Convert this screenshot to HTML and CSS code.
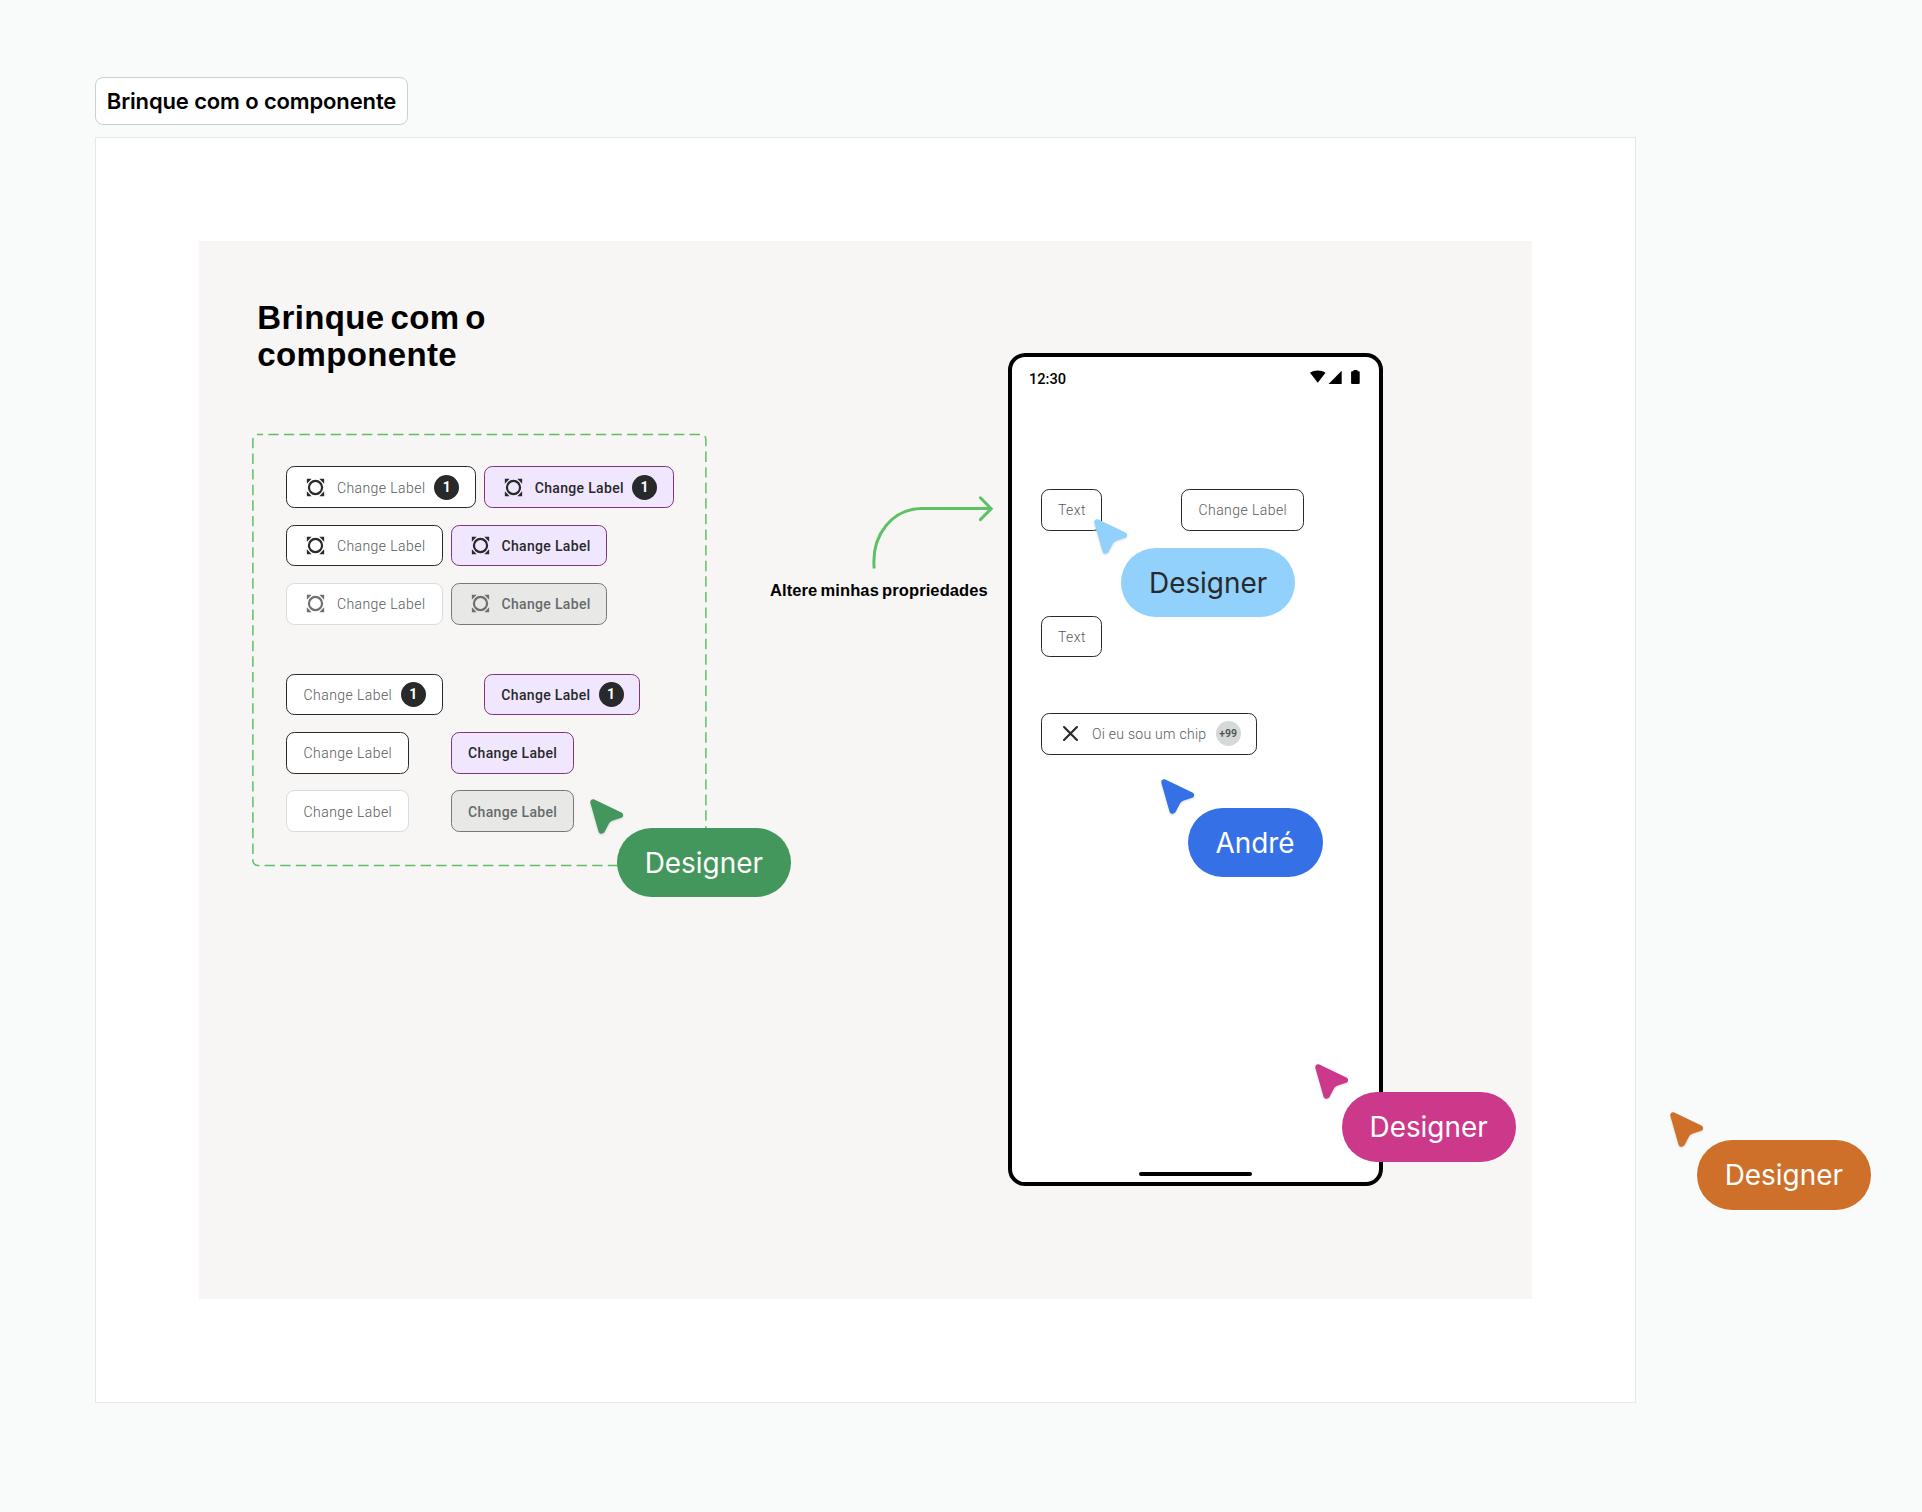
FILE: index.html
```html
<!DOCTYPE html>
<html lang="pt-BR">
<head>
  <meta charset="UTF-8">
  <title>Brinque com o componente</title>
  <link rel="stylesheet" href="styles.css">
</head>
<body>
  <!-- shared icons -->
  <svg class="defs" width="0" height="0">
    <symbol id="icon-shape" viewBox="0 0 24 24">
      <circle cx="12" cy="12" r="6.3" fill="none" stroke="currentColor" stroke-width="2.1"/>
      <path fill="currentColor" d="M3.7 3.7h4.6L3.7 8.3zM20.3 3.7v4.6l-4.6-4.6zM3.7 20.3v-4.6l4.6 4.6zM20.3 20.3h-4.6l4.6-4.6z"/>
    </symbol>
    <symbol id="icon-close" viewBox="0 0 24 24">
      <path d="M5.8 5.8l12.4 12.4M18.2 5.8L5.8 18.2" fill="none" stroke="currentColor" stroke-width="2.1" stroke-linecap="round"/>
    </symbol>
    <symbol id="icon-cursor" viewBox="0 0 34 36">
      <path fill="currentColor" d="M4.3.4L31.4 13.6C33.8 14.8 33.6 18 31.2 18.8L22.8 21.6C21 22.3 20 23 19 24.6L14.8 32.6C13.4 35.4 9.4 35.4 8.5 32.4L.4 4.1C-.3 1.4 2-.6 4.3.4z"/>
    </symbol>
  </svg>

  <div class="tag">Brinque com o componente</div>

  <div class="frame">
    <div class="panel">
      <div class="left">
        <h1>Brinque com o<br>componente</h1>
        <div class="variants">
          <svg class="dashes" width="456" height="434"><rect x="0.9" y="1.4" width="453" height="431" rx="5"/></svg>
          <div class="row">
            <div class="chip"><svg><use href="#icon-shape"/></svg><span>Change Label</span><b>1</b></div>
            <div class="chip active"><svg><use href="#icon-shape"/></svg><span>Change Label</span><b>1</b></div>
          </div>
          <div class="row">
            <div class="chip"><svg><use href="#icon-shape"/></svg><span>Change Label</span></div>
            <div class="chip active"><svg><use href="#icon-shape"/></svg><span>Change Label</span></div>
          </div>
          <div class="row">
            <div class="chip disabled"><svg><use href="#icon-shape"/></svg><span>Change Label</span></div>
            <div class="chip active disabled"><svg><use href="#icon-shape"/></svg><span>Change Label</span></div>
          </div>
          <div class="row wide first">
            <div class="chip"><span>Change Label</span><b>1</b></div>
            <div class="chip active"><span>Change Label</span><b>1</b></div>
          </div>
          <div class="row wide">
            <div class="chip"><span>Change Label</span></div>
            <div class="chip active"><span>Change Label</span></div>
          </div>
          <div class="row wide">
            <div class="chip disabled"><span>Change Label</span></div>
            <div class="chip active disabled"><span>Change Label</span></div>
          </div>
        </div>
      </div>

      <div class="hint">
        <svg width="124" height="74" viewBox="0 0 124 74" fill="none" stroke="#5fc166" stroke-width="3">
          <path d="M4.2 72.5C1 38 23 13 51.5 12.5H120.5"/>
          <path d="M110.4 1.8l10.8 10.9-10.8 10.9" stroke-linecap="round"/>
        </svg>
        <p>Altere minhas propriedades</p>
      </div>

      <div class="phone">
        <div class="status">
          <span>12:30</span>
          <svg width="50" height="15" viewBox="0 0 50 15">
            <path d="M0 2.8C4.6-.3 10.9-.3 15.5 2.8L7.8 12.8z"/>
            <path d="M31.7.8V14H18.5z"/>
            <path d="M43.5 0h4v1.3h1.2q1 0 1 1V13q0 1-1 1h-6.6q-1 0-1-1V2.3q0-1 1-1h1.4z"/>
          </svg>
        </div>
        <div class="screen">
          <div class="row">
            <div class="chip short"><span>Text</span></div>
            <div class="chip"><span>Change Label</span></div>
          </div>
          <div class="row">
            <div class="chip short"><span>Text</span></div>
          </div>
          <div class="row">
            <div class="chip long"><svg><use href="#icon-close"/></svg><span>Oi eu sou um chip</span><b>+99</b></div>
          </div>
        </div>
        <div class="home"></div>
      </div>
    </div>
  </div>

  <!-- collaborators on the canvas -->
  <div class="cursor green"><svg><use href="#icon-cursor"/></svg><span>Designer</span></div>
  <div class="cursor sky"><svg><use href="#icon-cursor"/></svg><span>Designer</span></div>
  <div class="cursor blue"><svg><use href="#icon-cursor"/></svg><span>André</span></div>
  <div class="cursor pink"><svg><use href="#icon-cursor"/></svg><span>Designer</span></div>
  <div class="cursor orange"><svg><use href="#icon-cursor"/></svg><span>Designer</span></div>
</body>
</html>
```
FILE: styles.css
```css
* { box-sizing: border-box; }
body { margin: 0; padding: 77px 0 0 95px; height: 1512px; position: relative; overflow: hidden; background: #f9fbfa; font-family: Inter, sans-serif; color: #000; }
.defs { position: absolute; }

.tag { width: 313px; height: 48px; line-height: 46px; border: 1px solid #c9d3cd; border-radius: 8px; background: #fff; font-size: 22px; font-weight: 600; letter-spacing: -0.13px; text-align: center; white-space: nowrap; }
.frame { width: 1541px; height: 1266px; margin-top: 12px; padding: 103px; border: 1px solid #e6e8e7; background: #fff; }
.panel { display: flex; align-items: flex-start; height: 1058px; padding: 58px 0 0 53px; background: #f7f6f5; }

.left { width: 455px; }
h1 { margin: 0 0 60px 5.3px; padding-top: 1px; font: bold 33px/36.5px "Liberation Sans", Arial, sans-serif; letter-spacing: 0.35px; word-spacing: -3.5px; white-space: nowrap; }
.variants { position: relative; height: 433px; padding: 33.3px 0 0 34.3px; }
.dashes { position: absolute; left: 0; top: 0; }
.dashes rect { fill: none; stroke: #5fbf66; stroke-width: 1.5; stroke-dasharray: 10.4 5.2; stroke-dashoffset: 5.2; }

.row { display: flex; gap: 8.3px; margin-bottom: 16.6px; }
.row.wide { gap: 41.5px; }
.row.first { margin-top: 49px; }

.chip { display: flex; align-items: center; gap: 8.3px; height: 41.7px; padding: 0 15.7px; border: 1px solid #28292b; border-radius: 8.3px; background: #fff; color: #28292b; font: 300 14px Roboto, sans-serif; }
.chip svg { width: 25px; height: 25px; flex: none; }
.chip span { width: 89.6px; padding: 1.2px 0 0 0.6px; white-space: nowrap; letter-spacing: 0.43px; color: #555a5a; }
.chip b { width: 25px; height: 25px; border-radius: 50%; background: #28292b; color: #fff; font-size: 14px; font-weight: 700; line-height: 25px; text-align: center; }
.chip.active { border-color: #82337f; background: #f0e7fe; }
.chip.active span { color: #28292b; font-weight: 500; letter-spacing: 0.33px; }
.chip.disabled { border-color: #d9dbda; color: #6c7070; }
.chip.active.disabled { border-color: #737978; background: #e8e8e7; }
.chip.active.disabled span { color: #666b6b; }
.chip.short span { width: 27.3px; padding-left: 0; }
.chip.long span { width: 116px; letter-spacing: 0.28px; }
.chip.long b { background: #d5d9d7; color: #4b5050; font-size: 10.5px; font-weight: 600; }

.hint { width: 218px; margin: 197px 0 0 63px; }
.hint svg { display: block; margin-left: 100px; }
.hint p { margin: 10px 0 0; font: bold 16.5px/20px "Liberation Sans", Arial, sans-serif; white-space: nowrap; letter-spacing: 0.1px; word-spacing: -1.5px; }

.phone { display: flex; flex-direction: column; align-items: center; width: 375px; height: 833px; margin: 54px 0 0 20px; border: 4px solid #000; border-radius: 17px; background: #fff; }
.status { display: flex; justify-content: space-between; align-items: flex-start; width: 100%; height: 132px; padding: 13px 19px 0 17px; font: 500 14.6px/19px Roboto, sans-serif; }
.screen { flex: 1; width: 100%; padding-left: 29.3px; }
.screen .row { margin: 0; }
.screen .row:nth-child(1) { gap: 79.3px; }
.screen .row:nth-child(2) { margin-top: 85px; }
.screen .row:nth-child(3) { margin-top: 55.5px; }
.home { width: 113px; height: 4px; margin-bottom: 6px; border-radius: 2px; background: #000; }

.cursor { position: absolute; padding: 28.5px 0 0 27px; }
.cursor svg { position: absolute; left: 0; top: 0; width: 34px; height: 36px; filter: drop-shadow(0 1px 1px rgba(0, 0, 0, 0.15)); }
.cursor span { display: block; height: 69.5px; padding: 0 28px; border-radius: 35px; color: #fff; font-size: 27.9px; line-height: 70px; }
.green { left: 589.7px; top: 799px; color: #43975c; }
.green span { background: #43975c; }
.sky { left: 1094px; top: 519px; color: #92d1fb; }
.sky span { background: #92d1fb; color: #28292b; }
.blue { left: 1160.5px; top: 779px; color: #3570e7; }
.blue span { background: #3570e7; }
.pink { left: 1314.5px; top: 1063.5px; color: #cc388a; }
.pink span { background: #cc388a; }
.orange { left: 1669.7px; top: 1111.5px; color: #ce702a; }
.orange span { background: #ce702a; }
```
